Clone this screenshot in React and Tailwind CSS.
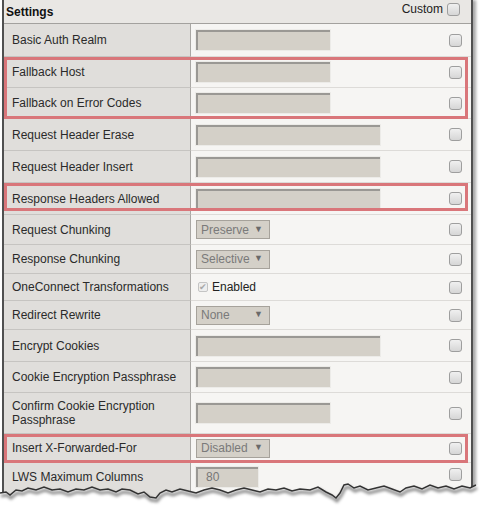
import React from 'react';

const rows = [
  { label: 'Basic Auth Realm', h: 'h-[33px]', kind: 'input', w: 'w-[134px]' },
  { label: 'Fallback Host', h: 'h-[31px]', kind: 'input', w: 'w-[134px]' },
  { label: 'Fallback on Error Codes', h: 'h-[31px]', kind: 'input', w: 'w-[134px]' },
  { label: 'Request Header Erase', h: 'h-[32px]', kind: 'input', w: 'w-[184px]' },
  { label: 'Request Header Insert', h: 'h-[32px]', kind: 'input', w: 'w-[184px]' },
  { label: 'Response Headers Allowed', h: 'h-[32px]', kind: 'input', w: 'w-[184px]' },
  { label: 'Request Chunking', h: 'h-[30px]', kind: 'select', value: 'Preserve' },
  { label: 'Response Chunking', h: 'h-[29px]', kind: 'select', value: 'Selective' },
  { label: 'OneConnect Transformations', h: 'h-[27px]', kind: 'check' },
  { label: 'Redirect Rewrite', h: 'h-[29px]', kind: 'select', value: 'None' },
  { label: 'Encrypt Cookies', h: 'h-[32px]', kind: 'input', w: 'w-[184px]' },
  { label: 'Cookie Encryption Passphrase', h: 'h-[31px]', kind: 'input', w: 'w-[134px]' },
  { label: 'Confirm Cookie Encryption Passphrase', h: 'h-[41px]', kind: 'input', w: 'w-[134px]' },
  { label: 'Insert X-Forwarded-For', h: 'h-[29px]', kind: 'select', value: 'Disabled' },
  { label: 'LWS Maximum Columns', h: 'h-[40px]', kind: 'input', w: 'w-[62px]', value: '80', top: true },
];

const Box = () => (
  <span className="block w-[13px] h-[13px] rounded-[3px] border border-[#9e9e9e] bg-gradient-to-b from-[#f0f0f0] to-[#d6d6d6] shrink-0" />
);

const Field = ({ w, value }) => (
  <div className={`${w} h-[20px] bg-[#d4d0c8] border-t-2 border-l-2 border-[#9a9894] outline outline-1 outline-[#ecebe8] text-[12px] text-[#777] pl-[8px] leading-[17px]`}>
    {value}
  </div>
);

const Select = ({ value }) => (
  <div className="w-[74px] h-[19px] bg-[#d4d0c8] border border-[#a6a29b] flex items-center justify-between pl-[4px] pr-[6px] text-[12px] text-[#7a7a7a]">
    <span>{value}</span>
    <span className="text-[9px] text-[#6a6a6a]">▼</span>
  </div>
);

const Row = ({ row }) => (
  <div className={`${row.h} flex`}>
    <div className={`w-[187px] shrink-0 bg-[#e0dedb] border-r border-b border-r-[#a9a7a4] border-b-[#c6c4c1] flex ${row.top ? 'items-start pt-[7px]' : 'items-center'} pl-[8px] pr-[4px] text-[12px] leading-[14px] text-[#2a2a2a]`}>
      {row.label}
    </div>
    <div className={`flex-1 bg-[#f6f5f3] border-b border-[#dddbd8] flex ${row.top ? 'items-start pt-[4px]' : 'items-center'} justify-between pl-[5px] pr-[9px]`}>
      {row.kind === 'input' && <Field w={row.w} value={row.value} />}
      {row.kind === 'select' && <Select value={row.value} />}
      {row.kind === 'check' && (
        <div className="flex items-center gap-[4px] pl-[2px] text-[12px] text-[#222]">
          <span className="w-[10px] h-[10px] rounded-[2px] border border-[#c4c4c4] bg-[#eeeeee] flex items-center justify-center text-[9px] leading-none text-[#a8a8a8]">✔</span>
          <span>Enabled</span>
        </div>
      )}
      <div className={row.top ? 'pt-[1px]' : ''}>
        <Box />
      </div>
    </div>
  </div>
);

const Highlight = ({ children, h }) => (
  <div className="relative">
    {children}
    <div className={`absolute left-0 right-[3px] top-0 ${h} border-[3px] border-[#d9767a] pointer-events-none`} />
  </div>
);

const torn =
  '0,493 6,492 10,495 16,490 22,491 28,488 36,490 44,487 52,490 60,489 68,492 76,489 84,490 92,487 100,490 108,489 116,492 122,489 130,490 138,494 144,492 150,497 156,498 160,493 166,490 172,492 180,489 188,491 196,493 204,490 212,488 220,490 228,493 236,490 244,488 252,490 260,492 268,489 276,490 284,488 292,491 300,489 310,490 318,487 326,492 332,495 336,498 340,493 344,485 348,484 354,488 360,486 368,490 376,488 384,486 392,489 400,492 406,488 414,486 422,489 430,485 438,488 446,486 454,489 462,486 470,488 476,485';

export default function App() {
  return (
    <div className="relative w-[480px] h-[509px] bg-white overflow-hidden font-['Liberation_Sans',Arial,sans-serif]">
      <div className="ml-[2px] w-[471px] h-[509px] border-x-2 border-[#505050] shadow-[3px_0_3px_rgba(0,0,0,0.35)] overflow-hidden">
        <div className="h-[24px] bg-[#e9e7e4] border-b border-[#a3a19e] flex items-center justify-between pl-[2px] pr-[11px]">
          <span className="text-[12px] font-bold text-[#111]">Settings</span>
          <div className="flex items-center gap-[4px] -mt-[5px]">
            <span className="text-[12px] text-[#222]">Custom</span>
            <Box />
          </div>
        </div>
        <Row row={rows[0]} />
        <Highlight h="h-[62px]">
          <Row row={rows[1]} />
          <Row row={rows[2]} />
        </Highlight>
        <Row row={rows[3]} />
        <Row row={rows[4]} />
        <Highlight h="h-[28px]">
          <Row row={rows[5]} />
        </Highlight>
        {rows.slice(6, 13).map((r) => (
          <Row key={r.label} row={r} />
        ))}
        <Highlight h="h-[29px]">
          <Row row={rows[13]} />
        </Highlight>
        <Row row={rows[14]} />
      </div>
      <svg className="absolute left-0 top-0 pointer-events-none" width="480" height="509" viewBox="0 0 480 509">
        <defs>
          <filter id="blur" x="-5%" y="-50%" width="110%" height="200%">
            <feGaussianBlur stdDeviation="1.5" />
          </filter>
        </defs>
        <polygon points={`${torn} 480,485 480,509 0,509`} fill="#ffffff" />
        <polyline points={torn} transform="translate(1,3)" fill="none" stroke="#000" strokeOpacity="0.45" strokeWidth="3" filter="url(#blur)" />
        <polyline points={torn} fill="none" stroke="#333" strokeWidth="1.5" />
      </svg>
    </div>
  );
}
